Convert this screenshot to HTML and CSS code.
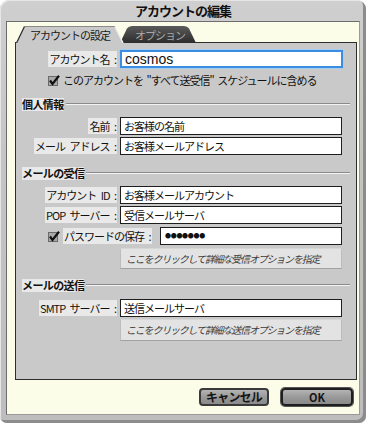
FILE: index.html
```html
<!DOCTYPE html>
<html lang="ja">
<head>
<meta charset="utf-8">
<title>アカウントの編集</title>
<link rel="stylesheet" href="styles.css">
</head>
<body>
<div class="window">
  <div class="titlebar">アカウントの編集</div>
  <div class="client">
    <div class="tabs">
      <div class="tab tab-active">
        <svg class="tab-shape" viewBox="0 0 108 18" width="108" height="18">
          <polygon points="0,18 8,1 99,1 107,18" fill="#c9c9c9"/>
          <path d="M0.5,18 L8.5,1.5" stroke="#2a2a2a" stroke-width="1.2" fill="none"/>
          <path d="M8.5,1.5 H99" stroke="#8a8a8a" stroke-width="1" fill="none"/>
          <path d="M99,1.5 L107,18" stroke="#f2f2f2" stroke-width="1.4" fill="none"/>
        </svg>
        <span class="tab-label">アカウントの設定</span>
      </div>
      <div class="tab tab-inactive">
        <svg class="tab-shape" viewBox="0 0 76 18" width="76" height="18">
          <defs>
            <linearGradient id="dk" x1="0" y1="0" x2="0" y2="1">
              <stop offset="0" stop-color="#5a5a5a"/>
              <stop offset="1" stop-color="#2c2c2c"/>
            </linearGradient>
          </defs>
          <path d="M0,18 L7,3.5 Q8.5,1 12,1 H64 Q67.5,1 69,3.5 L76,18 Z" fill="url(#dk)"/>
        </svg>
        <span class="tab-label">オプション</span>
      </div>
    </div>
    <div class="panel">
      <div class="row row-first">
        <div class="label"><span>アカウント名 :</span></div>
        <div class="field field-focus">cosmos</div>
      </div>
      <div class="check-row">
        <svg class="check" viewBox="0 0 12 11" width="12" height="11">
          <rect x="0.5" y="1.5" width="9" height="9" fill="#a9a9a9" stroke="#6a6a6a"/>
          <path d="M2,5.5 L4.5,9 L11,0.8" stroke="#111" stroke-width="2.2" fill="none"/>
        </svg>
        <span class="check-text">このアカウントを "すべて送受信" スケジュールに含める</span>
      </div>

      <div class="section section-1"><span class="section-title">個人情報</span><span class="section-line"></span></div>
      <div class="row row-after-section">
        <div class="label"><span>名前 :</span></div>
        <div class="field">お客様の名前</div>
      </div>
      <div class="row row-next">
        <div class="label"><span>メール アドレス :</span></div>
        <div class="field">お客様メールアドレス</div>
      </div>

      <div class="section section-2"><span class="section-title">メールの受信</span><span class="section-line"></span></div>
      <div class="row row-after-section">
        <div class="label"><span>アカウント ID :</span></div>
        <div class="field">お客様メールアカウント</div>
      </div>
      <div class="row row-next">
        <div class="label"><span>POP サーバー :</span></div>
        <div class="field">受信メールサーバ</div>
      </div>
      <div class="row row-pass">
        <svg class="check" viewBox="0 0 12 11" width="12" height="11">
          <rect x="0.5" y="1.5" width="9" height="9" fill="#a9a9a9" stroke="#6a6a6a"/>
          <path d="M2,5.5 L4.5,9 L11,0.8" stroke="#111" stroke-width="2.2" fill="none"/>
        </svg>
        <span class="pass-label"><span>パスワードの保存 :</span></span>
        <div class="field field-pass">●●●●●●●</div>
      </div>
      <div class="opt-btn opt-recv">ここをクリックして詳細な受信オプションを指定</div>

      <div class="section section-3"><span class="section-title">メールの送信</span><span class="section-line"></span></div>
      <div class="row row-smtp">
        <div class="label"><span>SMTP サーバー :</span></div>
        <div class="field">送信メールサーバ</div>
      </div>
      <div class="opt-btn opt-send">ここをクリックして詳細な送信オプションを指定</div>
    </div>
    <div class="footer">
      <button class="btn btn-cancel">キャンセル</button>
      <button class="btn btn-ok">OK</button>
    </div>
  </div>
</div>
</body>
</html>
```
FILE: styles.css
```css
* { box-sizing: border-box; }
html, body { margin: 0; padding: 0; background: #ffffff; }
body {
  font-family: "Noto Sans CJK JP", "Noto Sans", sans-serif;
  font-size: 11px;
  color: #111;
}
.window {
  width: 366px;
  height: 423px;
  border-radius: 9px 9px 7px 7px;
  background: linear-gradient(180deg, #cfcfcf 0%, #c4c4c4 40%, #bdbdbd 100%);
  box-shadow: inset -3px -3px 0 #8c8c8c, inset 1px 1px 0 #e6e6e6;
  padding: 0 6px 8px 6px;
  display: flex;
  flex-direction: column;
}
.titlebar {
  height: 21px;
  line-height: 21px;
  text-align: center;
  font-weight: bold;
  font-size: 13px;
  letter-spacing: -1px;
  color: #111;
}
.client {
  width: 354px;
  height: 394px;
  background: #fbfde9;
  border: 1px solid #6c6c6c;
  border-right-color: #9a9a9a;
  border-bottom-color: #9a9a9a;
  padding: 3px 2px 0 8px;
  display: flex;
  flex-direction: column;
}
.tabs {
  display: flex;
  height: 18px;
  margin-bottom: -1px;
  margin-left: 1px;
  position: relative;
  z-index: 2;
}
.tab {
  position: relative;
  height: 18px;
}
.tab-shape {
  position: absolute;
  left: 0;
  top: 0;
}
.tab-label {
  position: relative;
  display: block;
  line-height: 18px;
  padding-top: 1px;
  letter-spacing: -1px;
}
.tab-active {
  width: 108px;
  z-index: 2;
}
.tab-active .tab-label {
  padding-left: 14px;
  color: #1a1a1a;
}
.tab-inactive {
  width: 76px;
  margin-left: -4px;
  z-index: 1;
}
.tab-inactive .tab-label {
  padding-left: 15px;
  color: #a8a8a8;
}
.panel {
  position: relative;
  z-index: 1;
  width: 342px;
  height: 338px;
  background: #c9c9c9;
  border: 1px solid #2e2e2e;
  display: flex;
  flex-direction: column;
}
.row {
  display: flex;
  align-items: center;
  height: 18px;
}
.row-first { margin-top: 7px; }
.row-after-section { margin-top: 6px; }
.row-next { margin-top: 2px; }
.row-pass { margin-top: 3px; padding-left: 32px; }
.row-smtp { margin-top: 7px; }
.label {
  width: 104px;
  text-align: right;
  padding-right: 3px;
  letter-spacing: -1px;
  word-spacing: 3px;
  white-space: nowrap;
}
.label span, .pass-label span {
  background: #e9e9e9;
  padding: 0 1px;
}
.field {
  width: 222px;
  height: 18px;
  background: #ffffff;
  border: 1px solid #1e1e1e;
  padding-left: 3px;
  line-height: 16px;
  letter-spacing: -1px;
  white-space: nowrap;
  overflow: hidden;
}
.field-focus {
  width: 223px;
  border: 2px solid #3a8de0;
  box-shadow: 0 0 0 1px #a9cdf2;
  font-family: "Liberation Sans", "Noto Sans", sans-serif;
  font-size: 14px;
  letter-spacing: 0;
  line-height: 14px;
  padding-left: 3px;
}
.check-row {
  display: flex;
  align-items: center;
  height: 12px;
  margin-top: 6px;
  padding-left: 32px;
}
.check {
  flex: none;
  width: 12px;
  height: 11px;
  margin-right: 3px;
}
.check-text {
  letter-spacing: -1px;
  word-spacing: 2px;
  white-space: nowrap;
}
.pass-label {
  width: 97px;
  letter-spacing: -1px;
  word-spacing: 3px;
  white-space: nowrap;
}
.field-pass {
  width: 182px;
  font-size: 6px;
  letter-spacing: -0.3px;
  line-height: 16px;
  padding-left: 4px;
}
.section {
  display: flex;
  align-items: center;
  height: 13px;
  padding-left: 6px;
  padding-right: 6px;
}
.section-1 { margin-top: 12px; }
.section-2 { margin-top: 12px; }
.section-3 { margin-top: 10px; }
.section-title {
  font-weight: bold;
  letter-spacing: -0.6px;
  background: #e9e9e9;
  line-height: 13px;
  white-space: nowrap;
}
.section-line {
  flex: 1;
  height: 2px;
  margin-left: 2px;
  margin-top: -1px;
  border-top: 1px solid #8a8a8a;
  border-bottom: 1px solid #f4f4f4;
}
.opt-btn {
  margin-left: 104px;
  width: 222px;
  background: #e3e3e3;
  border: 1px solid #bdbdbd;
  border-top-color: #d6d6d6;
  border-bottom-color: #a2a2a2;
  font-size: 10px;
  font-style: oblique;
  letter-spacing: -1.2px;
  color: #3a3a3a;
  padding-left: 5px;
  white-space: nowrap;
}
.opt-recv { margin-top: 3px; height: 21px; line-height: 19px; }
.opt-send { margin-top: 2px; height: 22px; line-height: 20px; }
.footer {
  display: flex;
  justify-content: flex-end;
  gap: 12px;
  padding-top: 8px;
  padding-right: 4px;
}
.btn {
  height: 18px;
  padding: 0;
  margin: 0;
  font-family: "Noto Sans CJK JP", "Noto Sans", sans-serif;
  font-weight: bold;
  color: #151515;
  border-radius: 4px;
  background: linear-gradient(180deg, #b4b4b4 0%, #999999 50%, #8a8a8a 100%);
  line-height: 14px;
}
.btn-cancel {
  width: 70px;
  font-size: 12px;
  letter-spacing: -0.8px;
  border: 2px solid #3a3a3a;
}
.btn-ok {
  width: 72px;
  font-size: 11px;
  border: 2px solid #1e1e1e;
  box-shadow: 0 0 0 1px #555;
}
```
